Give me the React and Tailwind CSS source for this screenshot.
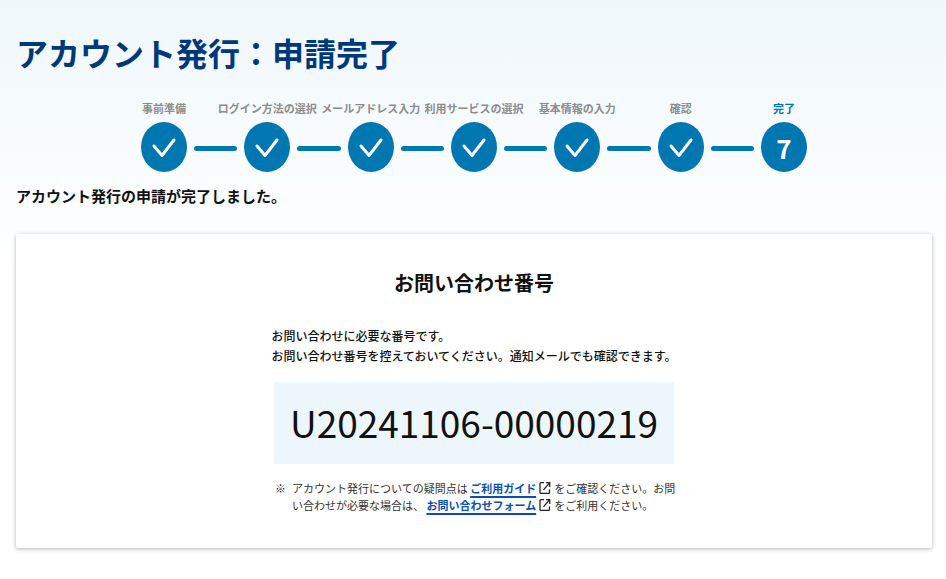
import React from 'react';

const steps = [
    '事前準備',
    'ログイン方法の選択',
    'メールアドレス入力',
    '利用サービスの選択',
    '基本情報の入力',
    '確認',
    '完了',
];

function CheckIcon() {
    return (
        <svg viewBox="0 0 46 50" className="h-full w-full" fill="none" stroke="#fff" strokeWidth="3" strokeLinecap="round" strokeLinejoin="round" aria-hidden="true">
            <path d="M13 24 L21 33.5 L33 18" />
        </svg>
    );
}

function ExternalIcon() {
    return (
        <svg viewBox="0 0 12 14" className="mx-[3px] inline-block h-[14px] w-3 align-[-2px]" fill="none" stroke="#222" strokeWidth="1.3" aria-hidden="true">
            <path d="M5 1.6 H2 Q1 1.6 1 2.6 V11.4 Q1 12.4 2 12.4 H9.5 Q10.5 12.4 10.5 11.4 V8.5" />
            <path d="M7 1.6 H10.7 V6 M10.5 1.8 L4.5 8.8" />
        </svg>
    );
}

function Stepper({ current }) {
    return (
        <ol className="mx-auto flex w-full max-w-[666px] items-end">
            {steps.map((label, index) => {
                const number = index + 1;
                const active = number === current;
                return (
                    <React.Fragment key={label}>
                        {index > 0 && (
                            <li aria-hidden="true" className="mx-[7px] mb-[21px] h-[5px] flex-1 rounded-full bg-[#0077b1]" />
                        )}
                        <li className="flex w-[46px] flex-col items-center gap-1.5">
                            <span className={`text-[11px] leading-4 font-bold whitespace-nowrap ${active ? 'text-[#0077b1]' : 'text-[#8c8c8c]'}`}>
                                {label}
                            </span>
                            <span className="flex h-[50px] w-[46px] items-center justify-center rounded-[50%] bg-[#0077b1] text-[26px] font-bold text-white">
                                {active ? number : <CheckIcon />}
                            </span>
                        </li>
                    </React.Fragment>
                );
            })}
        </ol>
    );
}

function TextLink({ children }) {
    return (
        <a href="#" className="font-bold text-[#0b4fae] underline decoration-2 underline-offset-3">
            {children}
        </a>
    );
}

function App() {
    return (
        <main
            lang="ja"
            className="min-h-screen bg-[linear-gradient(to_bottom,#eff7fb_0px,#ffffff_270px)] pt-7 pr-3.5 pb-8 pl-4 font-['Noto_Sans_CJK_JP',sans-serif] text-[#111]"
        >
            <h1 className="text-[32px] leading-[48px] font-bold text-[#00397a]">アカウント発行：申請完了</h1>

            <div className="mt-6">
                <Stepper current={7} />
            </div>

            <p className="mt-3 text-[15px] leading-6 font-bold">アカウント発行の申請が完了しました。</p>

            <section className="mt-[26px] flex flex-col items-center rounded-xs bg-white px-4 py-[34px] shadow-[0_1px_4px_rgba(0,0,0,0.3)]">
                <h2 className="text-[20px] leading-[30px] font-bold">お問い合わせ番号</h2>
                <p className="mt-7 text-[12px] leading-5 font-medium">
                    お問い合わせに必要な番号です。
                    <br />
                    お問い合わせ番号を控えておいてください。通知メールでも確認できます。
                </p>
                <div className="mt-4 w-full max-w-[400px] bg-[#edf6fa] pt-3 pb-3.5 text-center text-[37px] leading-[56px]">
                    U20241106-00000219
                </div>
                <p className="mt-4 flex w-full max-w-[406px] gap-1.5 pl-1 text-[11px] leading-[17px] text-[#333]">
                    <span>※</span>
                    <span>
                        アカウント発行についての疑問点は <TextLink>ご利用ガイド</TextLink>
                        <ExternalIcon />
                        をご確認ください。お問い合わせが必要な場合は、 <TextLink>お問い合わせフォーム</TextLink>
                        <ExternalIcon />
                        をご利用ください。
                    </span>
                </p>
            </section>
        </main>
    );
}

export default App;
